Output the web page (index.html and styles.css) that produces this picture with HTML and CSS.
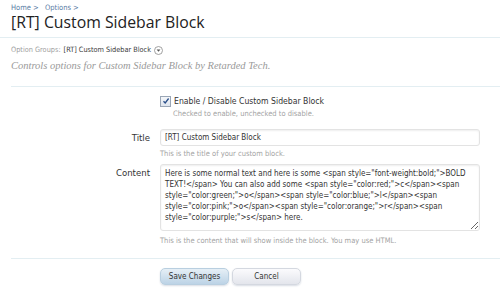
FILE: index.html
```html
<!DOCTYPE html>
<html>
<head>
<meta charset="utf-8">
<link rel="stylesheet" href="styles.css">
</head>
<body>
<div class="page">
  <div class="crumbs"><a href="#">Home</a> &gt; <span class="sp"></span><a href="#">Options</a> &gt;</div>
  <h1 class="title">[RT] Custom Sidebar Block</h1>
  <div class="groups">Option Groups: <span class="grp">[RT] Custom Sidebar Block</span><span class="drop"><svg width="9" height="9" viewBox="0 0 9 9"><circle cx="4.5" cy="4.5" r="4" fill="#fff" stroke="#8a8a8a" stroke-width="0.8"/><path d="M2.6 3.6 L6.4 3.6 L4.5 5.8 Z" fill="#555"/></svg></span></div>
  <p class="desc">Controls options for Custom Sidebar Block by Retarded Tech.</p>
  <form class="form">
    <div class="row row-check">
      <div class="label"></div>
      <div class="ctrl">
        <label class="check"><span class="box"><svg width="8" height="8" viewBox="0 0 8 8"><path d="M1.5 4.2 L3.2 6 L6.6 1.5" fill="none" stroke="#2a4f8a" stroke-width="1.3"/></svg></span>Enable / Disable Custom Sidebar Block</label>
        <div class="explain ex-check">Checked to enable, unchecked to disable.</div>
      </div>
    </div>
    <div class="row row-title">
      <div class="label">Title</div>
      <div class="ctrl">
        <input class="input" type="text" value="[RT] Custom Sidebar Block">
        <div class="explain">This is the title of your custom block.</div>
      </div>
    </div>
    <div class="row row-content">
      <div class="label">Content</div>
      <div class="ctrl">
        <textarea class="textarea">Here is some normal text and here is some &lt;span style="font-weight:bold;"&gt;BOLD TEXT!&lt;/span&gt; You can also add some &lt;span style="color:red;"&gt;c&lt;/span&gt;&lt;span style="color:green;"&gt;o&lt;/span&gt;&lt;span style="color:blue;"&gt;l&lt;/span&gt;&lt;span style="color:pink;"&gt;o&lt;/span&gt;&lt;span style="color:orange;"&gt;r&lt;/span&gt;&lt;span style="color:purple;"&gt;s&lt;/span&gt; here.</textarea>
        <div class="explain">This is the content that will show inside the block. You may use HTML.</div>
      </div>
    </div>
    <div class="buttons">
      <button type="button" class="btn btn-primary">Save Changes</button>
      <button type="button" class="btn">Cancel</button>
    </div>
  </form>
</div>
</body>
</html>
```
FILE: styles.css
```css
html, body {
  margin: 0;
  padding: 0;
  background: #ffffff;
}
body {
  font-family: "DejaVu Sans", "Liberation Sans", sans-serif;
  font-stretch: condensed;
  color: #333;
}
.page {
  width: 500px;
  height: 300px;
  overflow: hidden;
}
.crumbs {
  padding: 3px 0 0 11px;
  font-size: 7.5px;
  line-height: 9px;
  color: #5b7ea6;
}
.crumbs a {
  color: #5b7ea6;
  text-decoration: none;
}
.crumbs .sp {
  display: inline-block;
  width: 4px;
}
.title {
  margin: 0;
  padding: 0 0 5px 11px;
  font-family: "Open Sans", "Liberation Sans", sans-serif;
  font-stretch: normal;
  font-weight: normal;
  font-size: 15.8px;
  line-height: 20px;
  color: #222;
  border-bottom: 1px solid #e3eef2;
}
.groups {
  margin-top: 7px;
  padding-left: 11px;
  font-size: 7.3px;
  line-height: 10px;
  color: #a0a0a0;
  display: flex;
  align-items: center;
}
.groups .grp {
  color: #3a3a3a;
  margin-left: 3px;
}
.groups .drop {
  margin-left: 3px;
  display: flex;
}
.desc {
  margin: 4px 0 0 11px;
  padding: 0 0 14px 0;
  font-family: "Liberation Serif", serif;
  font-stretch: normal;
  font-style: italic;
  font-size: 10.5px;
  line-height: 13px;
  color: #9a9a9a;
  border-bottom: 1px solid #e3eef2;
}
.form {
  margin: 0 0 0 11px;
  padding-top: 8px;
}
.row {
  display: flex;
}
.label {
  width: 139px;
  padding-right: 10px;
  text-align: right;
  font-size: 9.5px;
  color: #333;
  flex: none;
}
.ctrl {
  width: 320px;
  flex: none;
}
.check {
  display: flex;
  align-items: center;
  font-size: 8.6px;
  line-height: 12px;
  color: #333;
}
.box {
  width: 9px;
  height: 9px;
  border: 1px solid #9aa6b6;
  background: linear-gradient(#f4f6f9, #dfe5ee);
  margin-right: 3px;
  display: flex;
  align-items: center;
  justify-content: center;
}
.explain {
  font-size: 7.5px;
  line-height: 10px;
  color: #a4a4a4;
  margin-top: 2px;
}
.ex-check {
  padding-left: 13px;
}
.row-title {
  margin-top: 10px;
}
.row-title .label {
  line-height: 17px;
}
.row-title .explain {
  margin-top: 3px;
}
.input {
  box-sizing: border-box;
  display: block;
  width: 320px;
  height: 17px;
  margin: 0;
  padding: 0 4px;
  border: 1px solid #e3e3e3;
  border-radius: 3px;
  background: #fff;
  font-family: "DejaVu Sans", "Liberation Sans", sans-serif;
  font-stretch: condensed;
  font-size: 8px;
  color: #333;
  box-shadow: inset 0 1px 2px #eee;
}
.row-content {
  margin-top: 5px;
}
.row-content .label {
  line-height: 18px;
}
.textarea {
  box-sizing: border-box;
  display: block;
  width: 320px;
  height: 67px;
  margin: 0;
  padding: 3px 4px;
  border: 1px solid #e3e3e3;
  border-radius: 3px;
  background: #fff;
  font-family: "DejaVu Sans", "Liberation Sans", sans-serif;
  font-stretch: condensed;
  font-size: 8px;
  line-height: 11px;
  color: #333;
  resize: vertical;
  overflow: hidden;
  box-shadow: inset 0 1px 2px #eee;
}
.row-content .explain {
  margin-top: 5px;
}
.buttons {
  margin-top: 12px;
  border-top: 1px solid #e3eef2;
  padding: 9px 0 0 149px;
  display: flex;
  gap: 3px;
  height: 40px;
}
.btn {
  width: 69px;
  height: 17px;
  padding: 0;
  border: 1px solid #d4d8e0;
  border-radius: 5px;
  background: linear-gradient(#fbfbfd, #e3e5ec);
  font-family: "DejaVu Sans", "Liberation Sans", sans-serif;
  font-stretch: condensed;
  font-size: 8px;
  color: #333;
  box-shadow: 0 1px 2px #d8dce4;
}
.btn-primary {
  border-color: #b9cfe0;
  background: linear-gradient(#e6eff6, #bcd3e6);
}
```
